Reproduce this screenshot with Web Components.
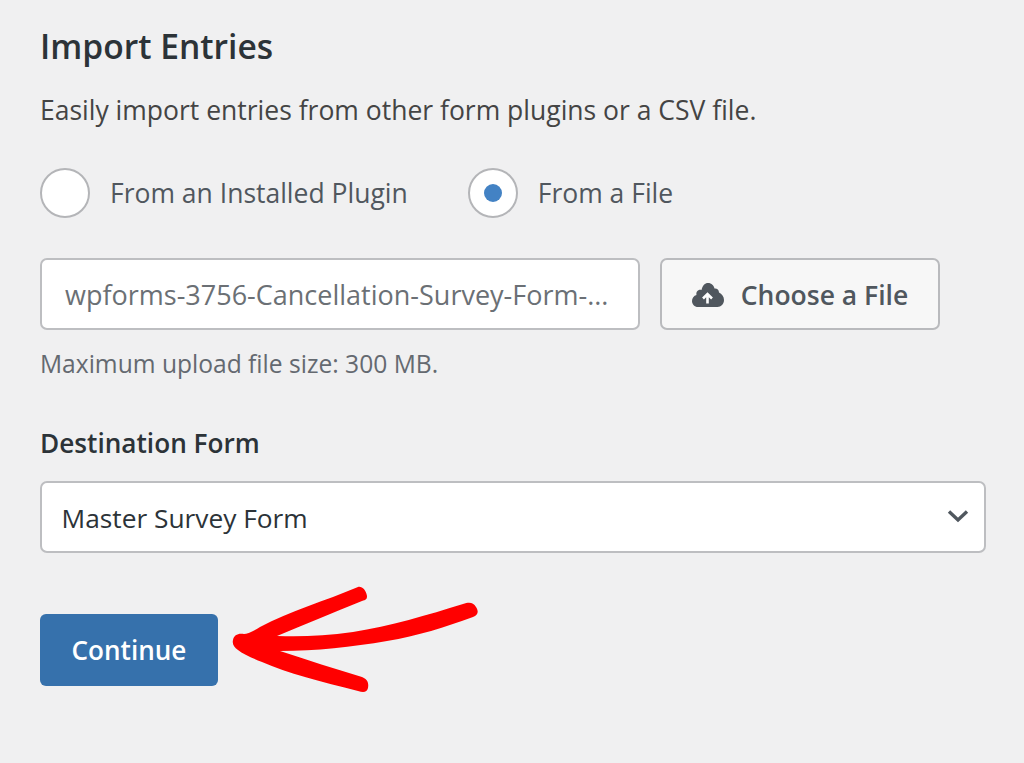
<!DOCTYPE html>
<html><head><meta charset="utf-8"><style>
html,body{margin:0;padding:0;background:#f0f0f1;height:763px;overflow:hidden}
body{font-family:"Open Sans","Noto Sans",sans-serif}
</style></head><body>
<import-panel>
<h-title>Import Entries</h-title>
<p-text>Easily import entries from other form plugins or a CSV file.</p-text>
<radio-row>
<radio-opt>From an Installed Plugin</radio-opt>
<radio-opt checked>From a File</radio-opt>
</radio-row>
<file-row name="wpforms-3756-Cancellation-Survey-Form-...">Choose a File</file-row>
<hint-text>Maximum upload file size: 300 MB.</hint-text>
<field-label>Destination Form</field-label>
<select-box>Master Survey Form</select-box>
<submit-row>Continue</submit-row>
</import-panel>
<script>
function def(name,html){customElements.define(name,class extends HTMLElement{constructor(){super();this.attachShadow({mode:'open'}).innerHTML=html}})}
const F='font-family:"Open Sans","Noto Sans",sans-serif;';
def('import-panel',`<style>:host{display:flex;flex-direction:column;padding:25px 38px 0 40px;box-sizing:border-box;width:1024px;height:763px;${F}}</style><slot></slot>`);
def('h-title',`<style>:host{display:block;font-size:33.600px;font-weight:600;line-height:42px;color:#2c3338}</style><slot></slot>`);
def('p-text',`<style>:host{display:block;margin-top:22px;font-size:26.500px;line-height:42px;color:#444}</style><slot></slot>`);
def('radio-row',`<style>:host{display:flex;gap:60px;margin-top:37px}</style><slot></slot>`);
customElements.define('radio-opt',class extends HTMLElement{constructor(){super();const c=this.hasAttribute('checked');this.attachShadow({mode:'open'}).innerHTML=`<style>:host{display:flex;align-items:center;gap:20px;font-size:26.500px;line-height:50px;color:#50575e}
.r{width:50px;height:50px;box-sizing:border-box;border:2px solid #b4b5b8;border-radius:50%;background:#fff;display:flex;align-items:center;justify-content:center}
.d{width:18px;height:18px;border-radius:50%;background:#4382c4}</style><span class="r">${c?'<span class="d"></span>':''}</span><slot></slot>`}});
customElements.define('file-row',class extends HTMLElement{constructor(){super();this.attachShadow({mode:'open'}).innerHTML=`<style>:host{display:flex;gap:20px;margin-top:40px}
.i{width:600px;height:72px;box-sizing:border-box;border:2px solid #bdbec1;border-radius:7px;background:#fff;padding:0 23px;display:flex;align-items:center;font-size:27px;color:#6b7075;white-space:nowrap;overflow:hidden}
.b{width:280px;height:72px;box-sizing:border-box;border:2px solid #b9babd;border-radius:7px;background:#f7f7f7;display:flex;align-items:center;justify-content:center;gap:17px;padding-top:1px;font-size:26.500px;font-weight:600;color:#50575e}
svg{width:32px;height:26px;display:block}</style><span class="i">${this.getAttribute('name')}</span><span class="b"><svg viewBox="0 0 32 26"><path fill="#50575e" d="M6 25C2.500 25 0 22.300 0 19C0 16 1.800 13.800 4.500 13C4.200 12 4.300 10.500 5 9.500C6 8 8 7.400 9.500 8C10.500 3.500 13 1 16 1C19.500 1 22 3.500 22.500 6.500C24.500 6 27 7.500 27 10.500C29.800 11.800 32 14.500 32 18C32 22 29 25 25.500 25Z"/><path d="M15.500 21.500V12.500M11 16.500L15.500 12L20 16.500" fill="none" stroke="#fff" stroke-width="2.600"/></svg><slot></slot></span>`}});
def('hint-text',`<style>:host{display:block;margin-top:19px;font-size:24.600px;line-height:30px;color:#646970}</style><slot></slot>`);
def('field-label',`<style>:host{display:block;margin-top:47px;font-size:26.200px;font-weight:600;line-height:34px;color:#2c3338}</style><slot></slot>`);
def('select-box',`<style>:host{display:flex;align-items:center;justify-content:space-between;margin-top:21px;height:72px;box-sizing:border-box;border:2px solid #bdbec1;border-radius:7px;background:#fff;padding:2px 15px 0 19.500px;font-size:26.300px;color:#2c3338;width:946px}
svg{width:22px;height:14px;display:block;margin-top:-4px}</style><slot></slot><svg viewBox="0 0 22 14"><path d="M2 2.500L11 11L20 2.500" fill="none" stroke="#50575e" stroke-width="3.400"/></svg>`);
def('submit-row',`<style>:host{display:block;position:relative;margin-top:61px}
.b{width:178px;height:72px;border-radius:6px;background:#3671ac;color:#fff;font-size:26.100px;font-weight:600;display:flex;align-items:center;justify-content:center}
svg{position:absolute;left:192px;top:-28px;width:250px;height:110px;display:block}</style><span class="b"><slot></slot></span><svg viewBox="232 586 250 110"><path fill="#f00" d="M358 587C362 586 366 590 367 596C367 599 366 600 362 601C334 612 306 624 277 636C300 637 325 636 353 632C390 626 428 615 463 604C469 602 473 602 476 607C479 612 478 615 473 617C445 627 418 636 387 641C352 647 316 651 280 651C308 660 335 669 362 677C367 679 369 682 368 688C367 692 364 693 358 691C322 682 287 673 262 662C252 658 243 654 238 650C234 647 232 644 233 640C234 635 238 633 244 634C247 634 252 632 260 627C290 611 325 601 358 587Z"/></svg>`);
</script>
</body></html>
